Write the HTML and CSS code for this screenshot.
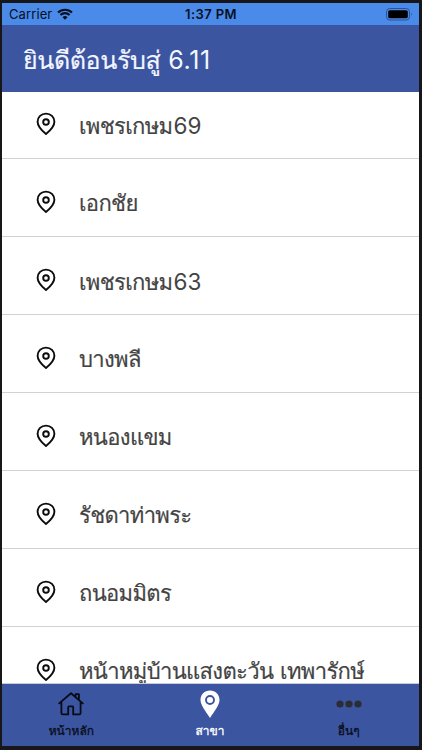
FILE: index.html
```html
<!DOCTYPE html>
<html lang="th">
<head>
<meta charset="utf-8">
<title>สาขา</title>
<link rel="stylesheet" href="styles.css">
</head>
<body>
<svg class="defs" width="0" height="0" aria-hidden="true">
  <symbol id="pin" viewBox="0 0 20 24">
    <path d="M10 22.1C8.3 20.7 1.6 15 1.6 9.8C1.6 5 5.3 1.6 10 1.6S18.4 5 18.4 9.8C18.4 15 11.7 20.7 10 22.1Z"/>
    <circle cx="10" cy="10" r="2.8"/>
  </symbol>
</svg>
<div class="phone">
  <div class="status">
    <div class="carrier"><span>Carrier</span>
      <svg class="wifi" viewBox="0 0 16 12"><path d="M1 4.6A10 10 0 0 1 15 4.6M3.4 7A6.6 6.6 0 0 1 12.6 7" fill="none" stroke="#07101f" stroke-width="2.1"/><path d="M8 11.7L5.5 9.2A3.6 3.6 0 0 1 10.5 9.2Z" fill="#07101f"/></svg>
    </div>
    <div class="time">1:37 PM</div>
    <svg class="battery" viewBox="0 0 27 13"><rect x=".5" y=".5" width="23" height="11.5" rx="3.2" fill="none" stroke="#2b5490"/><rect x="2.2" y="2.2" width="19.6" height="8.1" rx="1.6" fill="#000"/><path d="M25.1 4.3Q26.7 6.2 25.1 8.2Z" fill="#2b5490"/></svg>
  </div>
  <header class="header"><h1>ยินดีต้อนรับสู่ <span class="num">6.11</span></h1></header>
  <ul class="list">
    <li class="row"><svg class="pin"><use href="#pin"/></svg><span>เพชรเกษม<span class="digits">69</span></span></li>
    <li class="row"><svg class="pin"><use href="#pin"/></svg><span>เอกชัย</span></li>
    <li class="row"><svg class="pin"><use href="#pin"/></svg><span>เพชรเกษม<span class="digits">63</span></span></li>
    <li class="row"><svg class="pin"><use href="#pin"/></svg><span>บางพลี</span></li>
    <li class="row"><svg class="pin"><use href="#pin"/></svg><span>หนองแขม</span></li>
    <li class="row"><svg class="pin"><use href="#pin"/></svg><span>รัชดาท่าพระ</span></li>
    <li class="row"><svg class="pin"><use href="#pin"/></svg><span>ถนอมมิตร</span></li>
    <li class="row"><svg class="pin"><use href="#pin"/></svg><span>หน้าหมู่บ้านแสงตะวัน เทพารักษ์</span></li>
  </ul>
  <nav class="tabs">
    <div class="tab"><svg viewBox="0 0 28 28"><path d="M2.2 13.4L14 3.2L25.8 13.4M18.6 6.8V4.2H21.9V9.8M4.4 12V23Q4.4 24.4 5.8 24.4H11.2V17.2Q11.2 16.4 12 16.4H15.4Q16.2 16.4 16.2 17.2V24.4H22.2Q23.6 24.4 23.6 23V12" fill="none" stroke="#070b17" stroke-width="1.8" stroke-linecap="round" stroke-linejoin="round"/></svg><span>หน้าหลัก</span></div>
    <div class="tab active"><svg viewBox="0 0 28 28"><path d="M14 .6C8.5 .6 4.5 4.8 4.5 9.9C4.5 15.2 9.8 21.2 14 28C18.2 21.2 23.5 15.2 23.5 9.9C23.5 4.8 19.5 .6 14 .6Z" fill="#fff"/><circle cx="14" cy="10" r="4" fill="#fff" stroke="#3b55a1" stroke-width="1.9"/></svg><span>สาขา</span></div>
    <div class="tab"><svg viewBox="0 0 28 28"><g fill="#2c2d34"><circle cx="5" cy="14" r="3.6"/><circle cx="14" cy="14" r="3.6"/><circle cx="23" cy="14" r="3.6"/></g></svg><span>อื่นๆ</span></div>
  </nav>
</div>
</body>
</html>
```
FILE: styles.css
```css
* { box-sizing: border-box; }
body { margin: 0; background: #17171a; font-family: Loma, "Noto Sans Thai Looped", sans-serif; }
.defs { display: block; }
.phone { width: 422px; height: 750px; padding: 3px 3px 4px 2px; display: flex; flex-direction: column; overflow: hidden; }
.status { height: 22px; flex: none; background: #4a8ae8; color: #07101f; display: grid; grid-template-columns: 1fr auto 1fr; align-items: center; padding: 0 6px 0 7px; font-family: Inter, sans-serif; font-size: 13px; line-height: 22px; }
.carrier { display: flex; align-items: center; gap: 5px; letter-spacing: .1px; }
.wifi { width: 16px; height: 12px; }
.time { font-weight: 600; letter-spacing: .4px; }
.battery { width: 27px; height: 13px; justify-self: end; }
.header { height: 67px; flex: none; background: #3b55a1; padding-left: 21px; }
h1 { margin: 0; font-size: 25px; font-weight: 400; line-height: 71px; letter-spacing: -.4px; color: #f4f6ff; white-space: nowrap; -webkit-text-stroke: .2px; }
.num { font-family: Inter, sans-serif; letter-spacing: .6px; -webkit-text-stroke: 0; }
.digits { font-family: Inter, sans-serif; font-size: 22.5px; letter-spacing: .1px; margin-left: 1px; -webkit-text-stroke: 0; }
.list { list-style: none; margin: 0; padding: 0; background: #fff; flex: 1; min-height: 0; overflow: hidden; border-bottom: 1px solid #c9ccd6; }
.row { height: 78px; padding: 19px 0 0 34px; border-bottom: 1px solid #d2d2d2; display: flex; gap: 23px; font-size: 22px; line-height: 51px; letter-spacing: -.65px; color: #434343; white-space: nowrap; -webkit-text-stroke: .2px; }
.row:first-child { height: 67px; padding-top: 8px; }
.pin { width: 20px; height: 24px; flex: none; margin-top: 12px; fill: none; stroke: #0c0c0c; stroke-width: 1.9; stroke-linejoin: round; }
.tabs { height: 62px; flex: none; background: #3b55a1; display: grid; grid-template-columns: repeat(3, 1fr); padding-right: 1px; }
.tab { display: flex; flex-direction: column; align-items: center; padding-top: 6px; font-size: 12px; line-height: 25px; color: #090d1b; -webkit-text-stroke: .3px; }
.tab svg { width: 28px; height: 28px; flex: none; -webkit-text-stroke: 0; }
.active { color: #fff; }
```
